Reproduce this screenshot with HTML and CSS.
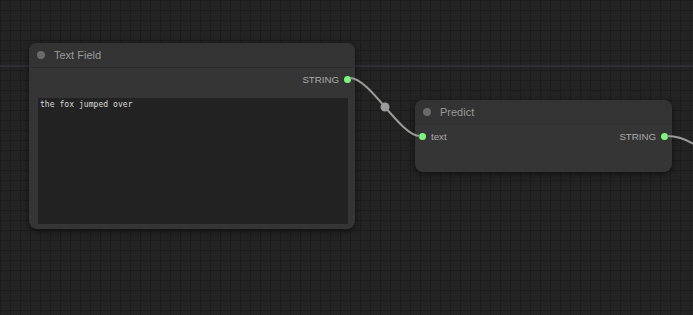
FILE: index.html
```html
<!DOCTYPE html>
<html>
<head>
<meta charset="utf-8">
<link rel="stylesheet" href="styles.css">
</head>
<body>
<div class="canvas">
  <div class="node node-text">
    <div class="node-title"><span class="title-dot"></span><span class="title-text">Text Field</span></div>
    <div class="slot-row out-only">
      <span class="slot-label">STRING</span><span class="slot-dot"></span>
    </div>
    <div class="textarea">the fox jumped over</div>
  </div>

  <div class="node node-predict">
    <div class="node-title"><span class="title-dot"></span><span class="title-text">Predict</span></div>
    <div class="slot-row">
      <div class="slot-in"><span class="slot-dot"></span><span class="slot-label">text</span></div>
      <div class="slot-out"><span class="slot-label">STRING</span><span class="slot-dot"></span></div>
    </div>
  </div>

  <svg class="wires" width="693" height="315" viewBox="0 0 693 315">
    <path d="M350 78 C 370 78, 400 136, 420 136" fill="none" stroke="#9a9c98" stroke-width="2"/>
    <circle cx="385" cy="107" r="4.5" fill="#9a9c98"/>
    <path d="M667 136 C 700 136, 720 170, 760 200" fill="none" stroke="#9a9c98" stroke-width="2"/>
  </svg>
</div>
</body>
</html>
```
FILE: styles.css
```css
html, body {
  margin: 0;
  padding: 0;
  background: #222;
}
.canvas {
  position: relative;
  width: 693px;
  height: 315px;
  overflow: hidden;
  background-color: #232323;
  background-image:
    linear-gradient(to bottom, transparent 65px, #2d3037 65px, #2d3037 67px, transparent 67px),
    repeating-linear-gradient(to right, #1c1c1c 0, #1c1c1c 1px, transparent 1px, transparent 10px),
    repeating-linear-gradient(to bottom, #1c1c1c 0, #1c1c1c 1px, transparent 1px, transparent 10px);
  font-family: "Liberation Sans", Arial, sans-serif;
}
.node {
  position: absolute;
  background: #353535;
  border-radius: 8px;
  box-shadow: 0 2px 6px rgba(0, 0, 0, 0.55);
  display: flex;
  flex-direction: column;
  box-sizing: border-box;
}
.node-text {
  left: 29px;
  top: 43px;
  width: 326px;
  height: 186px;
}
.node-predict {
  left: 415px;
  top: 100px;
  width: 257px;
  height: 72px;
}
.node-title {
  height: 24px;
  display: flex;
  align-items: center;
  padding-left: 8px;
  background: #333;
  border-radius: 8px 8px 0 0;
  border-bottom: 1px solid #2b2b2b;
}
.node-predict .node-title {
  border-bottom: 1px dotted #2a2a2a;
}
.title-dot {
  width: 8px;
  height: 8px;
  border-radius: 50%;
  background: #6a6a6a;
  flex: none;
}
.title-text {
  margin-left: 9px;
  font-size: 11px;
  color: #999;
}
.slot-row {
  height: 22px;
  display: flex;
  align-items: center;
  justify-content: space-between;
  padding: 0 4px 0 4px;
}
.slot-row.out-only {
  justify-content: flex-end;
}
.slot-in, .slot-out {
  display: flex;
  align-items: center;
}
.slot-label {
  font-size: 9.7px;
  color: #aaa;
}
.slot-dot {
  width: 7px;
  height: 7px;
  border-radius: 50%;
  background: #7cf77c;
  flex: none;
}
.slot-in .slot-dot {
  margin-right: 5px;
}
.slot-out .slot-label, .out-only .slot-label {
  margin-right: 5px;
}
.textarea {
  margin: 8px 7px 0 9px;
  height: 126px;
  background: #222;
  color: #d8d8d8;
  font-family: "DejaVu Sans Mono", "Liberation Mono", monospace;
  font-size: 8.1px;
  padding: 1px 2px;
  box-sizing: border-box;
}
.wires {
  position: absolute;
  left: 0;
  top: 0;
  pointer-events: none;
}
```
